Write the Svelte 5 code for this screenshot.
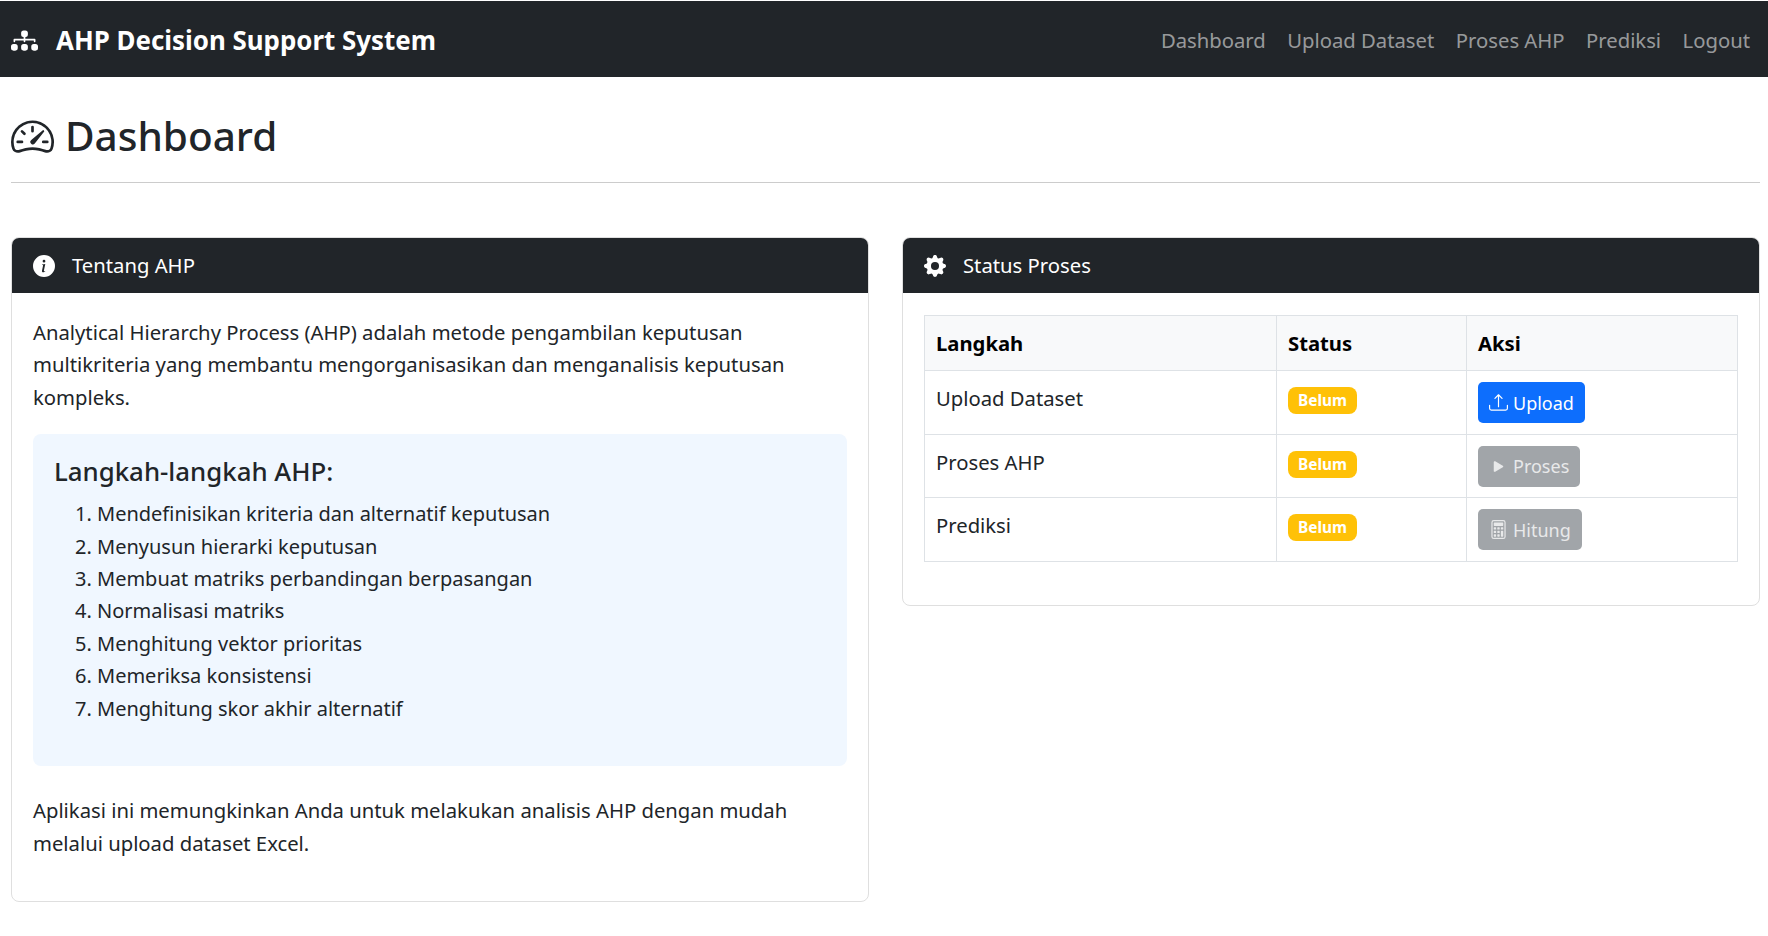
<script>
  const steps = [
    'Mendefinisikan kriteria dan alternatif keputusan',
    'Menyusun hierarki keputusan',
    'Membuat matriks perbandingan berpasangan',
    'Normalisasi matriks',
    'Menghitung vektor prioritas',
    'Memeriksa konsistensi',
    'Menghitung skor akhir alternatif'
  ];
  const links = ['Dashboard', 'Upload Dataset', 'Proses AHP', 'Prediksi', 'Logout'];
</script>

<nav class="navbar">
  <a class="brand" href="#top">
    <svg class="brand-icon" viewBox="0 0 16 16" fill="currentColor"><path fill-rule="evenodd" d="M6 3.5A1.5 1.5 0 0 1 7.5 2h1A1.5 1.5 0 0 1 10 3.5v1A1.5 1.5 0 0 1 8.5 6v1H14a.5.5 0 0 1 .5.5v1a.5.5 0 0 1-1 0V8h-5v.5a.5.5 0 0 1-1 0V8h-5v.5a.5.5 0 0 1-1 0v-1A.5.5 0 0 1 2 7h5.5V6A1.5 1.5 0 0 1 6 4.5zm-6 8A1.5 1.5 0 0 1 1.5 10h1A1.5 1.5 0 0 1 4 11.5v1A1.5 1.5 0 0 1 2.5 14h-1A1.5 1.5 0 0 1 0 12.5zm6 0A1.5 1.5 0 0 1 7.5 10h1a1.5 1.5 0 0 1 1.5 1.5v1A1.5 1.5 0 0 1 8.5 14h-1A1.5 1.5 0 0 1 6 12.5zm6 0a1.5 1.5 0 0 1 1.5-1.5h1a1.5 1.5 0 0 1 1.5 1.5v1a1.5 1.5 0 0 1-1.5 1.5h-1a1.5 1.5 0 0 1-1.5-1.5z"/></svg>
    AHP Decision Support System
  </a>
  <ul class="nav">
    {#each links as link}
      <li><a href="#top">{link}</a></li>
    {/each}
  </ul>
</nav>

<main class="page">
  <h1>
    <svg class="title-icon" viewBox="0 0 16 16" fill="currentColor"><path d="M8 4a.5.5 0 0 1 .5.5V6a.5.5 0 0 1-1 0V4.5A.5.5 0 0 1 8 4M3.732 5.732a.5.5 0 0 1 .707 0l.915.914a.5.5 0 1 1-.708.708l-.914-.915a.5.5 0 0 1 0-.707M2 10a.5.5 0 0 1 .5-.5h1.586a.5.5 0 0 1 0 1H2.5A.5.5 0 0 1 2 10m9.5 0a.5.5 0 0 1 .5-.5h1.5a.5.5 0 0 1 0 1H12a.5.5 0 0 1-.5-.5m.754-4.246a.39.39 0 0 0-.527-.02L7.547 9.31a.91.91 0 1 0 1.302 1.258l3.434-4.297a.39.39 0 0 0-.029-.518z"/><path fill-rule="evenodd" d="M0 10a8 8 0 1 1 15.547 2.661c-.442 1.253-1.845 1.602-2.932 1.25C11.309 13.488 9.475 13 8 13c-1.474 0-3.31.488-4.615.911-1.087.352-2.49.003-2.932-1.25A8 8 0 0 1 0 10m8-7a7 7 0 0 0-6.603 9.329c.203.575.923.876 1.68.63C4.397 12.533 6.358 12 8 12s3.604.532 4.923.96c.757.245 1.477-.056 1.68-.631A7 7 0 0 0 8 3"/></svg>
    Dashboard
  </h1>
  <hr />

  <div class="columns">
    <section class="card">
      <header class="card-header">
        <svg class="head-icon" viewBox="0 0 16 16" fill="currentColor"><path d="M8 16A8 8 0 1 0 8 0a8 8 0 0 0 0 16m.93-9.412-1 4.705c-.07.34.029.533.304.533.194 0 .487-.07.686-.246l-.088.416c-.287.346-.92.598-1.465.598-.703 0-1.002-.422-.808-1.319l.738-3.468c.064-.293.006-.399-.287-.47l-.451-.081.082-.381 2.29-.287zM8 5.5a1 1 0 1 1 0-2 1 1 0 0 1 0 2"/></svg>
        Tentang AHP
      </header>
      <div class="card-body">
        <p class="intro">Analytical Hierarchy Process (AHP) adalah metode pengambilan keputusan multikriteria yang membantu mengorganisasikan dan menganalisis keputusan kompleks.</p>
        <div class="steps">
          <h2>Langkah-langkah AHP:</h2>
          <ol>
            {#each steps as step}
              <li>{step}</li>
            {/each}
          </ol>
        </div>
        <p>Aplikasi ini memungkinkan Anda untuk melakukan analisis AHP dengan mudah melalui upload dataset Excel.</p>
      </div>
    </section>

    <section class="card status">
      <header class="card-header">
        <svg class="head-icon" viewBox="0 0 16 16" fill="currentColor"><path d="M9.405 1.05c-.413-1.4-2.397-1.4-2.81 0l-.1.34a1.464 1.464 0 0 1-2.105.872l-.31-.17c-1.283-.698-2.686.705-1.987 1.987l.169.311c.446.82.023 1.841-.872 2.105l-.34.1c-1.4.413-1.4 2.397 0 2.81l.34.1a1.464 1.464 0 0 1 .872 2.105l-.17.31c-.698 1.283.705 2.686 1.987 1.987l.311-.169a1.464 1.464 0 0 1 2.105.872l.1.34c.413 1.4 2.397 1.4 2.81 0l.1-.34a1.464 1.464 0 0 1 2.105-.872l.31.17c1.283.698 2.686-.705 1.987-1.987l-.169-.311a1.464 1.464 0 0 1 .872-2.105l.34-.1c1.4-.413 1.4-2.397 0-2.81l-.34-.1a1.464 1.464 0 0 1-.872-2.105l.17-.31c.698-1.283-.705-2.686-1.987-1.987l-.311.169a1.464 1.464 0 0 1-2.105-.872zM8 10.93a2.929 2.929 0 1 1 0-5.86 2.929 2.929 0 0 1 0 5.858z"/></svg>
        Status Proses
      </header>
      <div class="card-body">
        <table>
          <thead>
            <tr><th class="c1">Langkah</th><th class="c2">Status</th><th>Aksi</th></tr>
          </thead>
          <tbody>
            <tr>
              <td>Upload Dataset</td>
              <td><span class="badge">Belum</span></td>
              <td>
                <a class="btn primary" href="#top">
                  <svg viewBox="0 0 16 16" fill="currentColor"><path d="M.5 9.9a.5.5 0 0 1 .5.5v2.5a1 1 0 0 0 1 1h12a1 1 0 0 0 1-1v-2.5a.5.5 0 0 1 1 0v2.5a2 2 0 0 1-2 2H2a2 2 0 0 1-2-2v-2.5a.5.5 0 0 1 .5-.5"/><path d="M7.646 1.146a.5.5 0 0 1 .708 0l3 3a.5.5 0 0 1-.708.708L8.5 2.707V11.5a.5.5 0 0 1-1 0V2.707L5.354 4.854a.5.5 0 1 1-.708-.708z"/></svg>
                  Upload
                </a>
              </td>
            </tr>
            <tr>
              <td>Proses AHP</td>
              <td><span class="badge">Belum</span></td>
              <td>
                <a class="btn disabled" href="#top">
                  <svg viewBox="0 0 16 16" fill="currentColor"><path d="m11.596 8.697-6.363 3.692c-.54.313-1.233-.066-1.233-.697V4.308c0-.63.692-1.01 1.233-.696l6.363 3.692a.802.802 0 0 1 0 1.393"/></svg>
                  Proses
                </a>
              </td>
            </tr>
            <tr>
              <td>Prediksi</td>
              <td><span class="badge">Belum</span></td>
              <td>
                <a class="btn disabled" href="#top">
                  <svg viewBox="0 0 16 16" fill="currentColor"><path d="M12 1a1 1 0 0 1 1 1v12a1 1 0 0 1-1 1H4a1 1 0 0 1-1-1V2a1 1 0 0 1 1-1zM4 0a2 2 0 0 0-2 2v12a2 2 0 0 0 2 2h8a2 2 0 0 0 2-2V2a2 2 0 0 0-2-2z"/><path d="M4 2.5a.5.5 0 0 1 .5-.5h7a.5.5 0 0 1 .5.5v2a.5.5 0 0 1-.5.5h-7a.5.5 0 0 1-.5-.5zm0 4a.5.5 0 0 1 .5-.5h1a.5.5 0 0 1 .5.5v1a.5.5 0 0 1-.5.5h-1a.5.5 0 0 1-.5-.5zm0 3a.5.5 0 0 1 .5-.5h1a.5.5 0 0 1 .5.5v1a.5.5 0 0 1-.5.5h-1a.5.5 0 0 1-.5-.5zm0 3a.5.5 0 0 1 .5-.5h1a.5.5 0 0 1 .5.5v1a.5.5 0 0 1-.5.5h-1a.5.5 0 0 1-.5-.5zm3-6a.5.5 0 0 1 .5-.5h1a.5.5 0 0 1 .5.5v1a.5.5 0 0 1-.5.5h-1a.5.5 0 0 1-.5-.5zm0 3a.5.5 0 0 1 .5-.5h1a.5.5 0 0 1 .5.5v1a.5.5 0 0 1-.5.5h-1a.5.5 0 0 1-.5-.5zm0 3a.5.5 0 0 1 .5-.5h1a.5.5 0 0 1 .5.5v1a.5.5 0 0 1-.5.5h-1a.5.5 0 0 1-.5-.5zm3-6a.5.5 0 0 1 .5-.5h1a.5.5 0 0 1 .5.5v1a.5.5 0 0 1-.5.5h-1a.5.5 0 0 1-.5-.5zm0 3a.5.5 0 0 1 .5-.5h1a.5.5 0 0 1 .5.5v4a.5.5 0 0 1-.5.5h-1a.5.5 0 0 1-.5-.5z"/></svg>
                  Hitung
                </a>
              </td>
            </tr>
          </tbody>
        </table>
      </div>
    </section>
  </div>
</main>

<style>
  :global(body) {
    margin: 0;
    background: #fff;
    color: #212529;
    font-family: "Noto Sans", "Open Sans", sans-serif;
    font-size: 20.25px;
    line-height: 32.4px;
  }

  a {
    text-decoration: none;
  }

  .navbar {
    display: flex;
    align-items: center;
    justify-content: space-between;
    box-sizing: border-box;
    height: 76px;
    margin-top: 1px;
    padding: 2px 18px 0 11px;
    background: #212529;
  }

  .brand {
    display: flex;
    align-items: center;
    gap: 18px;
    color: #fff;
    font-size: 25.9px;
    font-weight: 700;
  }

  .brand-icon {
    width: 27px;
    height: 27px;
  }

  .nav {
    display: flex;
    gap: 21.5px;
    margin: 0;
    padding: 0;
    list-style: none;
  }

  .nav a {
    color: rgba(255, 255, 255, 0.55);
  }

  .page {
    padding: 0 8px 0 11px;
  }

  h1 {
    display: flex;
    align-items: center;
    gap: 11px;
    margin: 0;
    padding: 23px 0 10px;
    height: 72px;
    font-size: 40.5px;
    line-height: 52px;
    font-weight: 500;
  }

  .title-icon {
    width: 43px;
    height: 43px;
  }

  hr {
    margin: 0 0 54px;
    border: 0;
    border-top: 1px solid #ccc;
  }

  .columns {
    display: grid;
    grid-template-columns: 858px 858px;
    gap: 33px;
    align-items: start;
  }

  .card {
    border: 1px solid #dfdfdf;
    border-radius: 8px;
    overflow: hidden;
  }

  .card-header {
    display: flex;
    align-items: center;
    gap: 17px;
    height: 55px;
    padding: 0 21px;
    background: #212529;
    color: #fff;
  }

  .head-icon {
    width: 22px;
    height: 22px;
  }

  .card-body {
    padding: 21px;
    height: 608px;
    box-sizing: border-box;
  }

  .status .card-body {
    height: auto;
    padding: 22px 21px 43px;
  }

  p {
    margin: 0 0 21px;
  }

  .intro {
    margin-top: 2px;
  }

  .steps {
    height: 332px;
    box-sizing: border-box;
    padding: 21px;
    margin-bottom: 28px;
    background: #f0f7ff;
    border-radius: 8px;
  }

  h2 {
    margin: 0 0 11px;
    font-size: 25.8px;
    line-height: 32px;
    font-weight: 500;
  }

  ol {
    margin: 0;
    padding-left: 43px;
    font-size: 20px;
  }

  table {
    width: 100%;
    border-collapse: collapse;
    table-layout: fixed;
  }

  th,
  td {
    box-sizing: border-box;
    padding: 11px;
    border: 1px solid #dee2e6;
    text-align: left;
    vertical-align: top;
  }

  td {
    padding-bottom: 10.5px;
  }

  th {
    background: #f8f9fa;
    color: #000;
    font-weight: 700;
  }

  .c1 {
    width: 352px;
  }

  .c2 {
    width: 190px;
  }

  .badge {
    display: inline-block;
    margin-top: 5px;
    vertical-align: top;
    padding: 0 10px;
    background: #ffc107;
    color: #fff;
    border-radius: 8px;
    font-size: 15.4px;
    font-weight: 700;
    line-height: 27px;
  }

  .btn {
    display: inline-flex;
    align-items: center;
    vertical-align: top;
    gap: 5px;
    height: 41px;
    padding: 0 11px;
    border-radius: 5px;
    color: #fff;
    font-size: 18px;
  }

  .btn svg {
    width: 19px;
    height: 19px;
  }

  .primary {
    background: #0d6efd;
  }

  .disabled {
    background: #a1a5a9;
    color: #e8e9ea;
  }
</style>
